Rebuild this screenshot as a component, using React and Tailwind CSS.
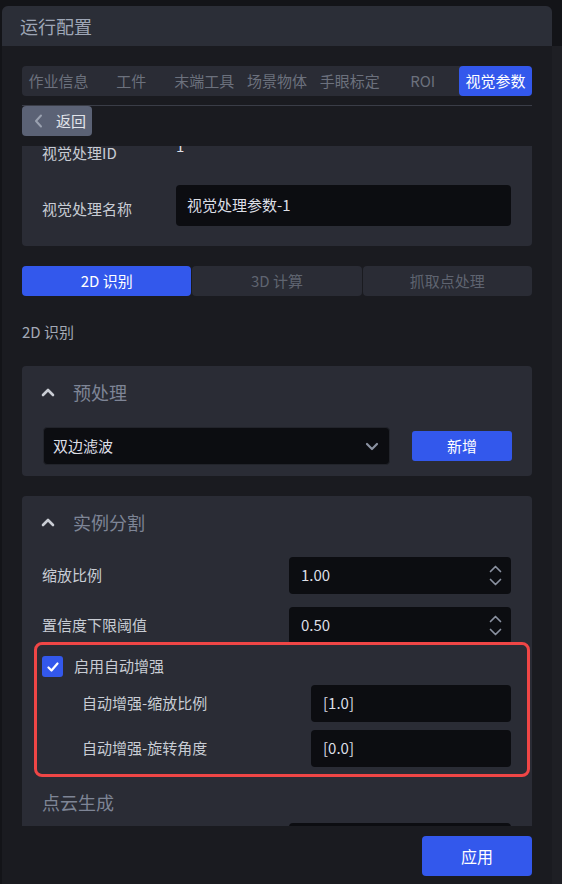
import React from "react";

const font = { fontFamily: '"Noto Sans CJK SC", "Noto Sans", sans-serif' };

function Spinner() {
  return (
    <div className="flex flex-col items-center gap-[5px]">
      <svg width="13" height="8" viewBox="0 0 13 8" fill="none">
        <polyline points="1.5,6.5 6.5,1.5 11.5,6.5" stroke="#8a91a0" strokeWidth="1.7" strokeLinecap="round" strokeLinejoin="round" />
      </svg>
      <svg width="13" height="8" viewBox="0 0 13 8" fill="none">
        <polyline points="1.5,1.5 6.5,6.5 11.5,1.5" stroke="#8a91a0" strokeWidth="1.7" strokeLinecap="round" strokeLinejoin="round" />
      </svg>
    </div>
  );
}

function ChevronUp() {
  return (
    <svg width="14" height="9" viewBox="0 0 14 9" fill="none">
      <polyline points="2,7 7,2 12,7" stroke="#c9cdd4" strokeWidth="2.6" strokeLinecap="round" strokeLinejoin="round" />
    </svg>
  );
}

function NumRow({ label, value }) {
  return (
    <div className="flex items-center justify-between">
      <span className="text-[15px] text-[#c8ccd4]">{label}</span>
      <div className="w-[222px] h-[37px] rounded-[4px] bg-[#0c0d11] flex items-center justify-between pl-[12px] pr-[9px]">
        <span className="text-[15px] text-[#dcdfe6]">{value}</span>
        <Spinner />
      </div>
    </div>
  );
}

function SubRow({ label, value }) {
  return (
    <div className="flex items-center justify-between pl-[40px]">
      <span className="text-[15px] text-[#c8ccd4]">{label}</span>
      <div className="w-[200px] h-[37px] rounded-[4px] bg-[#0c0d11] flex items-center pl-[12px]">
        <span className="text-[15px] text-[#dcdfe6]">{value}</span>
      </div>
    </div>
  );
}

export default function App() {
  const tabs = ["作业信息", "工件", "末端工具", "场景物体", "手眼标定", "ROI", "视觉参数"];
  return (
    <div className="w-[562px] h-[884px] bg-[#131418] flex overflow-hidden" style={font}>
      <div className="w-[550px] ml-[2px] mt-[6px] h-[878px] rounded-t-[6px] bg-[#1a1b20] flex flex-col overflow-hidden">
        {/* header */}
        <div className="h-[40px] shrink-0 bg-[#2b2e37] px-[18px] flex items-center">
          <span className="text-[18px] text-[#9ea6b6]">运行配置</span>
        </div>

        <div className="px-[20px] flex flex-col flex-1 min-h-0">
          {/* tabs */}
          <div className="mt-[20px] h-[30px] shrink-0 rounded-[4px] bg-[#2a2c35] flex">
            {tabs.map((t, i) => (
              <div
                key={t}
                className={
                  i === tabs.length - 1
                    ? "flex-1 flex items-center justify-center rounded-[4px] bg-[#3358ec] text-white text-[15px]"
                    : "flex-1 flex items-center justify-center text-[#6c717d] text-[15px]"
                }
              >
                {t}
              </div>
            ))}
          </div>
          <div className="mt-[9px] h-[1px] shrink-0 bg-[#3a3d47]" />
          <div className="shrink-0 flex">
            <div className="h-[30px] w-[70px] rounded-[4px] bg-[#5b6275] flex items-center pl-[12px] gap-[13px]">
              <svg width="9" height="14" viewBox="0 0 9 14" fill="none">
                <polyline points="7,1.5 2,7 7,12.5" stroke="#9aa1b0" strokeWidth="2" strokeLinecap="round" strokeLinejoin="round" />
              </svg>
              <span className="text-[15px] text-[#e2e5eb]">返回</span>
            </div>
          </div>

          {/* scroll area */}
          <div className="mt-[10px] h-[680px] shrink-0 overflow-hidden">
            <div className="-mt-[40px] flex flex-col">
              {/* info card */}
              <div className="rounded-[4px] bg-[#2a2c35] pl-[20px] pr-[21px] py-[20px] flex flex-col gap-[18px]">
                <div className="h-[41px] flex items-center">
                  <span className="w-[134px] pt-[13px] text-[15px] text-[#c8ccd4]">视觉处理ID</span>
                  <span className="text-[15px] text-[#dcdfe6]">1</span>
                </div>
                <div className="h-[41px] flex items-center">
                  <span className="w-[134px] pt-[7px] text-[15px] text-[#c8ccd4]">视觉处理名称</span>
                  <div className="flex-1 h-[41px] rounded-[4px] bg-[#0c0d11] flex items-center pl-[11px]">
                    <span className="text-[15px] text-[#dcdfe6]">视觉处理参数-1</span>
                  </div>
                </div>
              </div>

              {/* sub tabs */}
              <div className="mt-[20px] h-[30px] flex gap-[1px]">
                <div className="flex-1 rounded-[4px] bg-[#3358ec] text-white text-[15px] flex items-center justify-center">2D 识别</div>
                <div className="flex-1 rounded-[4px] bg-[#2a2c35] text-[#5f6470] text-[15px] flex items-center justify-center">3D 计算</div>
                <div className="flex-1 rounded-[4px] bg-[#2a2c35] text-[#5f6470] text-[15px] flex items-center justify-center">抓取点处理</div>
              </div>

              <div className="mt-[25px] h-[22px] leading-[22px] text-[15px] text-[#a3a9b5]">2D 识别</div>

              {/* 预处理 card */}
              <div className="mt-[23px] rounded-[4px] bg-[#2a2c35]">
                <div className="h-[52px] flex items-center pl-[19px] gap-[18px]">
                  <ChevronUp />
                  <span className="text-[18px] text-[#7e8596]">预处理</span>
                </div>
                <div className="pt-[9px] pb-[11px] pl-[21px] pr-[20px] flex items-center justify-between">
                  <div className="w-[347px] h-[38px] rounded-[4px] bg-[#0c0d11] border border-[#22242b] flex items-center justify-between pl-[9px] pr-[10px]">
                    <span className="text-[15px] text-[#dcdfe6]">双边滤波</span>
                    <svg width="14" height="9" viewBox="0 0 14 9" fill="none">
                      <polyline points="2,2 7,7 12,2" stroke="#8b92a2" strokeWidth="2.2" strokeLinecap="round" strokeLinejoin="round" />
                    </svg>
                  </div>
                  <div className="w-[100px] h-[30px] rounded-[3px] bg-[#3358ec] text-white text-[15px] flex items-center justify-center">新增</div>
                </div>
              </div>

              {/* 实例分割 card */}
              <div className="mt-[20px] rounded-t-[4px] bg-[#2a2c35] relative pb-[40px]">
                <div className="h-[52px] flex items-center pl-[19px] gap-[18px]">
                  <ChevronUp />
                  <span className="text-[18px] text-[#7e8596]">实例分割</span>
                </div>
                <div className="pt-[9px] pl-[20px] pr-[21px] flex flex-col">
                  <div className="flex flex-col gap-[13px]">
                    <NumRow label="缩放比例" value="1.00" />
                    <NumRow label="置信度下限阈值" value="0.50" />
                  </div>
                  <div className="mt-[12px] h-[21px] flex items-center gap-[11px]">
                    <div className="w-[21px] h-[21px] rounded-[3px] bg-[#3358ec] flex items-center justify-center">
                      <svg width="12" height="10" viewBox="0 0 12 10" fill="none">
                        <polyline points="1.5,5.5 4.5,8.5 10.5,1.5" stroke="#ffffff" strokeWidth="2.2" strokeLinecap="round" strokeLinejoin="round" />
                      </svg>
                    </div>
                    <span className="text-[15px] text-[#c8ccd4]">启用自动增强</span>
                  </div>
                  <div className="mt-[8px] flex flex-col gap-[8px]">
                    <SubRow label="自动增强-缩放比例" value="[1.0]" />
                    <SubRow label="自动增强-旋转角度" value="[0.0]" />
                  </div>
                  <div className="mt-[22px] h-[26px] leading-[26px] text-[18px] text-[#7e8596]">点云生成</div>
                  <div className="mt-[8px] flex justify-end">
                    <div className="w-[222px] h-[37px] rounded-[4px] bg-[#0c0d11]" />
                  </div>
                </div>

                {/* annotation box */}
                <div className="absolute left-[12px] top-[146px] w-[496px] h-[135px] rounded-[8px] border-[3px] border-[#ef4646] pointer-events-none" />
              </div>
            </div>
          </div>

          {/* footer */}
          <div className="flex justify-end pt-[10px]">
            <div className="w-[110px] h-[40px] rounded-[4px] bg-[#3358ec] text-white text-[16px] flex items-center justify-center">应用</div>
          </div>
        </div>
      </div>
      <div className="flex-1 mt-[46px] bg-[#1e1f24]" />
    </div>
  );
}
